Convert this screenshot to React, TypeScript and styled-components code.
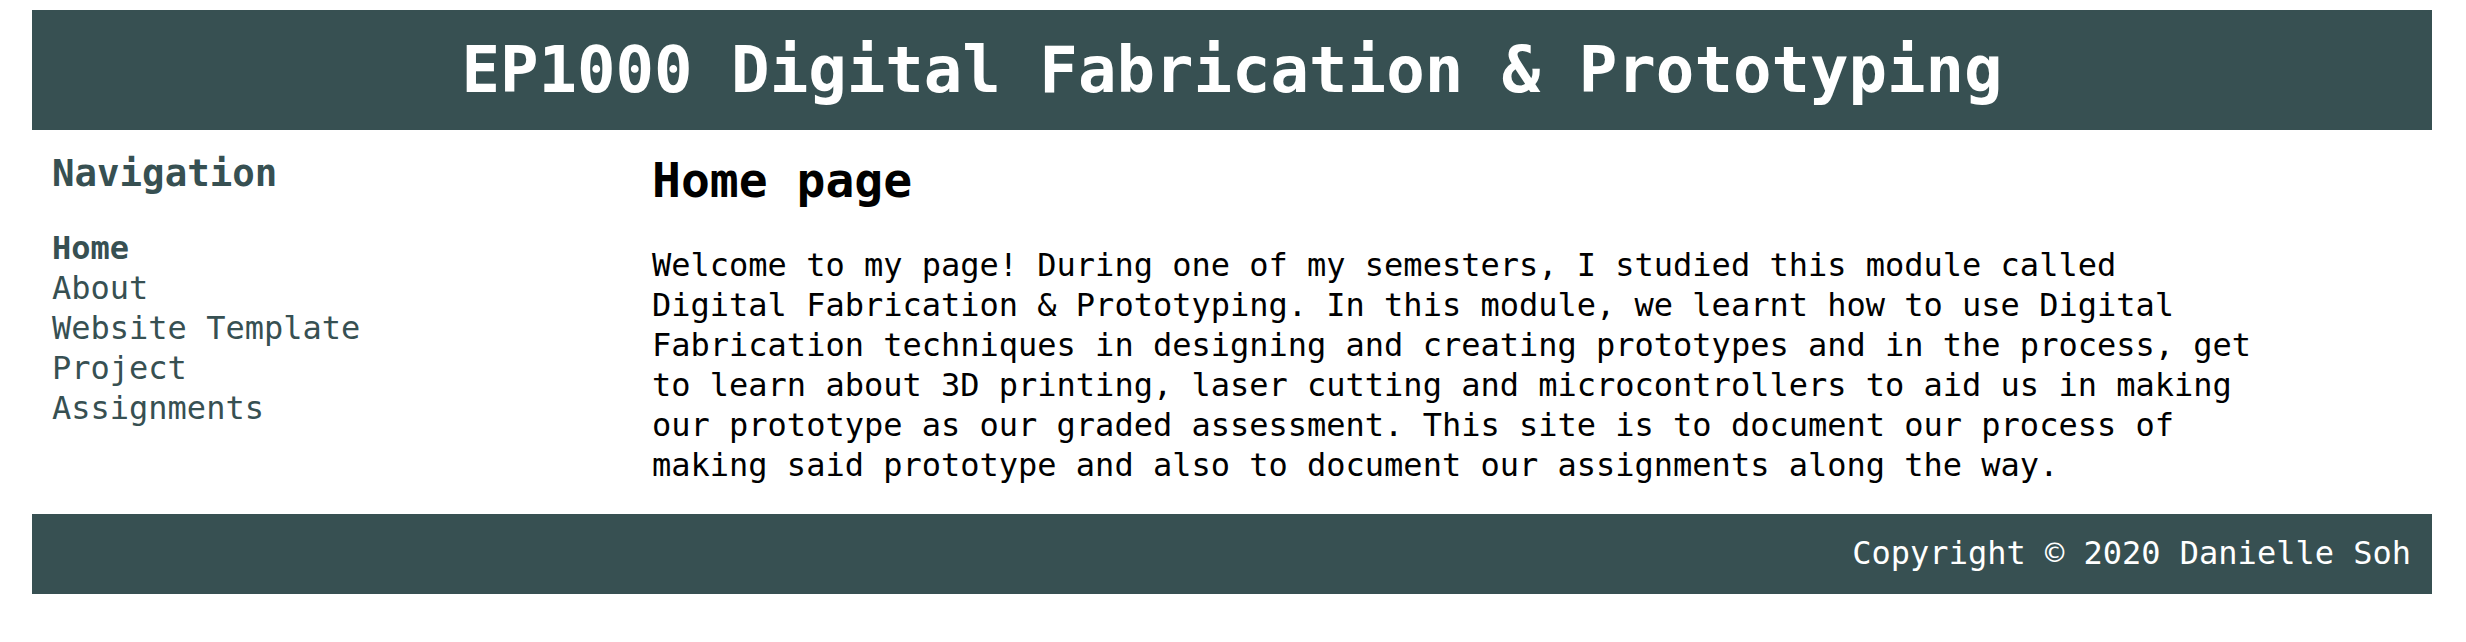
import React from 'react'
import styled, { createGlobalStyle } from 'styled-components'

const GlobalStyle = createGlobalStyle`
body {
    margin: 0;
    background: #ffffff;
    font-family: "DejaVu Sans Mono", "Liberation Mono", monospace;
    font-size: 32px;
    color: #000000;
}
`

const data = {
    title: "EP1000 Digital Fabrication & Prototyping",
    links: [
        { label: "Home", active: true },
        { label: "About" },
        { label: "Website Template" },
        { label: "Project" },
        { label: "Assignments" }
    ],
    heading: "Home page",
    content: "Welcome to my page! During one of my semesters, I studied this module called Digital Fabrication & Prototyping. In this module, we learnt how to use Digital Fabrication techniques in designing and creating prototypes and in the process, get to learn about 3D printing, laser cutting and microcontrollers to aid us in making our prototype as our graded assessment. This site is to document our process of making said prototype and also to document our assignments along the way.",
    footer: "Copyright © 2020 Danielle Soh"
}

const Page = styled.div`
padding: 10px 34px 0 32px;
`

const Header = styled.header`
height: 120px;
background: #375052;
display: flex;
align-items: center;
justify-content: center;
`

const Title = styled.h1`
margin: 0;
color: #ffffff;
font-size: 64px;
font-weight: bold;
line-height: 1.164;
`

const Main = styled.div`
display: grid;
grid-template-columns: 1fr 3fr;
`

const Sidebar = styled.nav`
padding: 21px 20px 30px;
`

const NavTitle = styled.h3`
margin: 0 0 33px;
font-size: 37.44px;
line-height: 44px;
font-weight: bold;
color: #375052;
`

const NavList = styled.ul`
list-style: none;
margin: 0;
padding: 0;
`

const NavLink = styled.a<{ $active?: boolean }>`
display: block;
font-size: 32px;
line-height: 40px;
color: #375052;
text-decoration: none;
font-weight: ${p => (p.$active ? 'bold' : 'normal')};
`

const Content = styled.section`
padding: 22px 20px 29px;
`

const Heading = styled.h2`
margin: 0 0 37px;
font-size: 48px;
line-height: 56px;
font-weight: bold;
`

const Text = styled.p`
margin: 0;
max-width: 83.5ch;
font-size: 32px;
line-height: 40px;
`

const Footer = styled.footer`
height: 80px;
background: #375052;
display: flex;
align-items: center;
justify-content: flex-end;
padding: 0 21px;
`

const FooterText = styled.span`
color: #ffffff;
font-size: 32px;
line-height: 1.164;
`

const App = () => {
    return (
        <Page>
            <GlobalStyle />
            <Header>
                <Title>{data.title}</Title>
            </Header>
            <Main>
                <Sidebar>
                    <NavTitle>Navigation</NavTitle>
                    <NavList>
                        {data.links.map(link => (
                            <li key={link.label}>
                                <NavLink href="#" $active={link.active}>{link.label}</NavLink>
                            </li>
                        ))}
                    </NavList>
                </Sidebar>
                <Content>
                    <Heading>{data.heading}</Heading>
                    <Text>{data.content}</Text>
                </Content>
            </Main>
            <Footer>
                <FooterText>{data.footer}</FooterText>
            </Footer>
        </Page>
    )
}

export default App
